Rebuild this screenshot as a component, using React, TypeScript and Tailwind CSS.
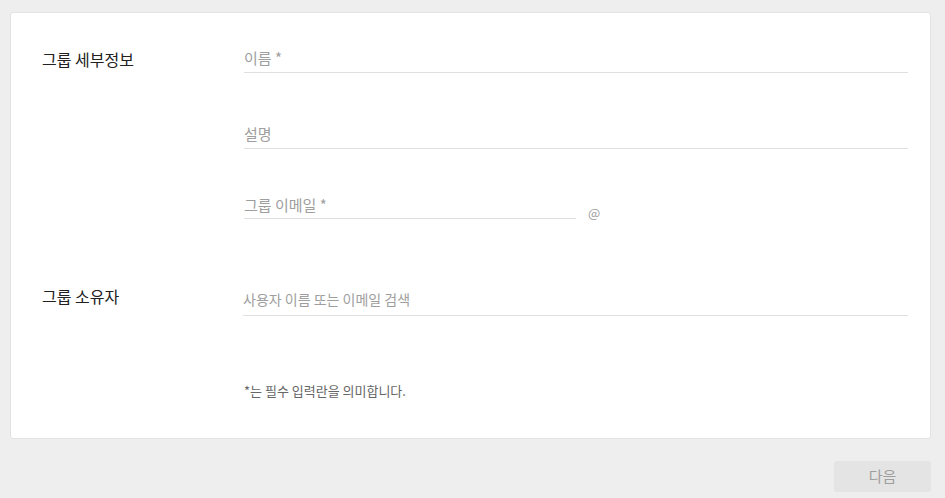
import React from "react";

const font = { fontFamily: '"Noto Sans CJK KR", "Noto Sans", sans-serif' };

function Field({ text, className = "", pb = "pb-[4px]", size = "text-[15px]" }: { text: string; className?: string; pb?: string; size?: string }) {
  return (
    <div className={`h-[30px] flex items-end ${pb} border-b border-[#e0e0e0] ${size} leading-[20px] text-[#9e9e9e] ${className}`}>
      {text}
    </div>
  );
}

export default function App() {
  return (
    <div className="w-[945px] h-[498px] bg-[#eeeeee] pt-[12px] overflow-hidden" style={font}>
      <div className="ml-[10px] w-[921px] h-[427px] bg-white rounded-[3px] border border-[#e2e2e2] pl-[31px] pr-[22px] pt-[30px]">
        <div className="flex items-start">
          <div className="w-[202px] mt-[4px] text-[16px] leading-[24px] text-[#212121]">그룹 세부정보</div>
          <div className="flex-1">
            <Field text="이름 *" />
            <Field text="설명" className="mt-[46px]" />
            <div className="mt-[40px] flex items-end">
              <Field text="그룹 이메일 *" className="w-[332px]" pb="pb-[3px]" />
              <div className="ml-[12px] mb-[-3px] text-[13px] leading-[18px] text-[#9e9e9e]">@</div>
            </div>
          </div>
        </div>
        <div className="flex items-start mt-[67px]">
          <div className="w-[201px] mt-[-2px] text-[16px] leading-[24px] text-[#212121]">그룹 소유자</div>
          <div className="flex-1">
            <Field text="사용자 이름 또는 이메일 검색" pb="pb-[6px]" size="text-[14px]" />
            <div className="mt-[66px] ml-[1px] text-[13px] leading-[18px] text-[#666666]">*는 필수 입력란을 의미합니다.</div>
          </div>
        </div>
      </div>
      <div className="flex justify-end pr-[14px] mt-[22px]">
        <div className="w-[97px] h-[31px] rounded-[3px] bg-[#e4e4e4] flex items-center justify-center text-[15px] text-[#9e9e9e]">다음</div>
      </div>
    </div>
  );
}
